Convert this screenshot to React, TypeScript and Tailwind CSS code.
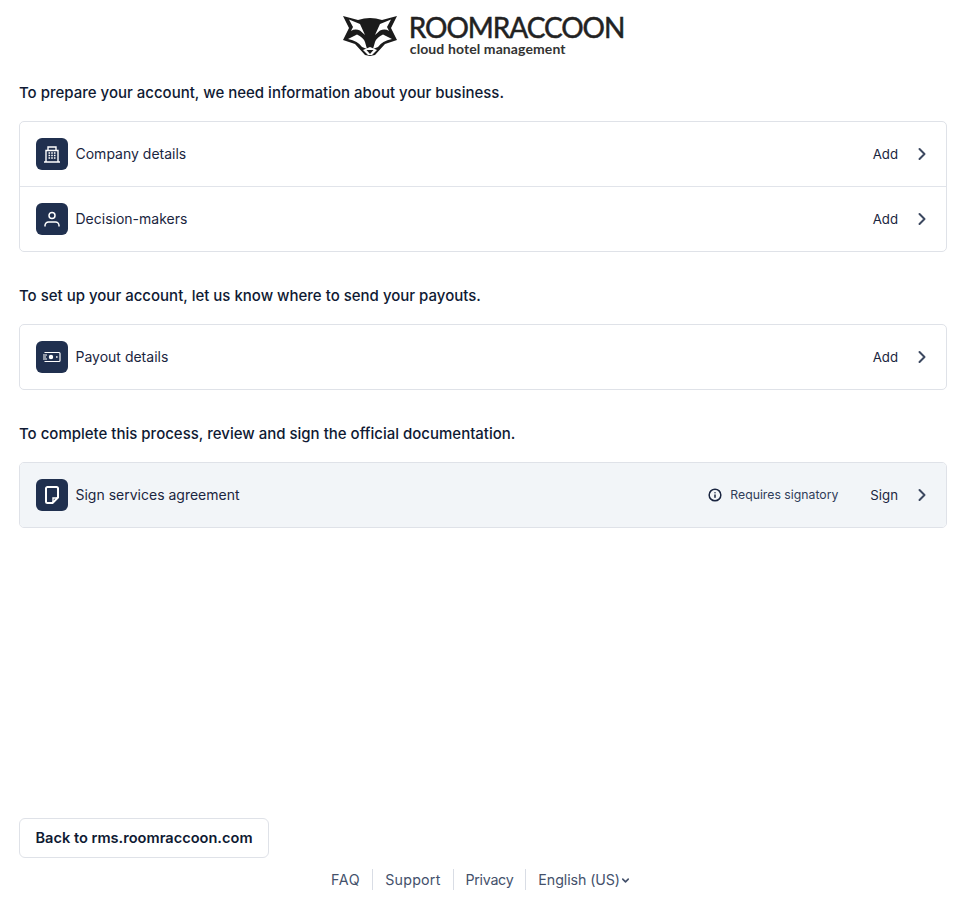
import { ChevronRight, ChevronDown, Info } from "lucide-react";
import type { ReactNode } from "react";

function Logo() {
  return (
    <div className="flex h-[64px] items-start justify-center pt-[13px]">
      <svg width="56" height="42" viewBox="0 0 56 42" className="mt-[2px] mr-[12px]">
        <path
          fill="#1b1b1b"
          d="M1 1 L16 5 Q28 1 40 5 L55 1 L49 13 L55 25 L43 29 L33 40 L28 41 L23 40 L13 29 L1 25 L7 13 Z"
        />
        <path fill="#fff" d="M7 4.5 L18 9 L23 20 L18 15.5 Q13 13.5 9 16 L11 12 Z" />
        <path fill="#fff" d="M49 4.5 L38 9 L33 20 L38 15.5 Q43 13.5 47 16 L45 12 Z" />
        <path fill="#fff" d="M6 24 L15 19.5 Q21 22 23 27 L25 34 L20 32 Q16 26 6 24 Z" />
        <path fill="#fff" d="M50 24 L41 19.5 Q35 22 33 27 L31 34 L36 32 Q40 26 50 24 Z" />
        <path fill="#fff" d="M21 35 L28 32 L35 35 L30 40 L26 40 Z" />
        <path fill="#1b1b1b" d="M24.5 35 L31.5 35 L28 39 Z" />
      </svg>
      <div className="font-['Lato',sans-serif] text-[#222222]">
        <div className="-ml-[1px] text-[28px] leading-[28px] tracking-[-1.05px] [-webkit-text-stroke:0.5px_#222222]">
          ROOMRACCOON
        </div>
        <div className="text-[14px] leading-[16px] font-bold tracking-[0.1px] text-[#333333]">
          cloud hotel management
        </div>
      </div>
    </div>
  );
}

function IconTile({ children }: { children: ReactNode }) {
  return (
    <span className="flex h-8 w-8 items-center justify-center rounded-[6px] bg-[#20304f] text-white">
      {children}
    </span>
  );
}

function Row({
  icon,
  label,
  action,
  note,
  shaded,
  divided,
}: {
  icon: ReactNode;
  label: string;
  action: string;
  note?: string;
  shaded?: boolean;
  divided?: boolean;
}) {
  return (
    <div
      className={`flex items-center pr-[14px] pl-[16px] ${shaded ? "bg-[#f2f5f8]" : ""} ${
        divided ? "h-[65px] border-b border-[#e1e4ea]" : "h-[64px]"
      }`}
    >
      <IconTile>{icon}</IconTile>
      <span className="-mt-[1px] ml-[7.5px] text-[14px] leading-5 text-[#1a2540]">{label}</span>
      <div className="ml-auto flex items-center text-[13.25px] text-[#1a2540]">
        {note && (
          <span className="mt-[1px] mr-8 flex items-center text-[12.25px] text-[#2f3c59]">
            <Info size={14} strokeWidth={2.6} className="mr-[8px] -mt-[1px] text-[#1a2540]" />
            {note}
          </span>
        )}
        <span className="mt-[1px]">{action}</span>
        <ChevronRight size={20} strokeWidth={2.4} className="ml-[14px] text-[#3c4860]" />
      </div>
    </div>
  );
}

function Card({ children }: { children: ReactNode }) {
  return <div className="overflow-hidden rounded-[5px] border border-[#dfe2e8]">{children}</div>;
}

function Heading({ children }: { children: ReactNode }) {
  return <h2 className="mb-[18px] text-[15px] leading-5 font-medium text-[#0f1a33]">{children}</h2>;
}

function BuildingIcon() {
  return (
    <svg width="20" height="20" viewBox="0 0 20 20" fill="none" stroke="currentColor" strokeWidth="1.4">
      <path d="M2 18h16" />
      <path d="M4 18V6.5h12V18" />
      <path d="M6 6.5V3h8v3.5" />
      <path d="M6.5 9h1.6M9.2 9h1.6M11.9 9h1.6M6.5 11.5h1.6M9.2 11.5h1.6M11.9 11.5h1.6M6.5 14h1.6M9.2 14h1.6M11.9 14h1.6" strokeWidth="1.5" />
    </svg>
  );
}

function PersonIcon() {
  return (
    <svg width="20" height="20" viewBox="0 0 20 20" fill="none" stroke="currentColor" strokeWidth="1.5">
      <circle cx="10" cy="6.5" r="3" />
      <path d="M3 17.5v-1a3.5 3.5 0 0 1 3.5-3.5h7a3.5 3.5 0 0 1 3.5 3.5v1" />
    </svg>
  );
}

function PayoutIcon() {
  return (
    <svg width="20" height="20" viewBox="0 0 20 20" fill="none" stroke="currentColor" strokeWidth="1.2">
      <path d="M2.5 5.5h14.5a1 1 0 0 1 1 1v7a1 1 0 0 1-1 1H2.5" />
      <path d="M1 8h4M1 10h3M1 12h4" />
      <circle cx="9" cy="10" r="1.6" fill="currentColor" />
      <path d="M14 10h1.6" strokeWidth="1.6" />
    </svg>
  );
}

function NoteIcon() {
  return (
    <svg width="20" height="20" viewBox="0 0 20 20" fill="none" stroke="currentColor" strokeWidth="2">
      <path
        d="M5.5 2h9A1.5 1.5 0 0 1 16 3.5V12.5L10.5 18H5.5A1.5 1.5 0 0 1 4 16.5v-13A1.5 1.5 0 0 1 5.5 2Z"
        strokeLinejoin="round"
      />
      <path d="M11 17.5V13h4.5" strokeWidth="1.4" />
    </svg>
  );
}

function FooterLink({ children, last }: { children: ReactNode; last?: boolean }) {
  return (
    <span className={`flex h-[21px] items-center px-3 ${last ? "" : "border-r border-[#d9dde5]"}`}>{children}</span>
  );
}

export default function App() {
  return (
    <div className="flex h-[915px] flex-col pr-[10px] pl-[19px] font-['Inter',sans-serif]">
      <Logo />
      <div className="mt-[19px]">
        <Heading>To prepare your account, we need information about your business.</Heading>
        <Card>
          <Row icon={<BuildingIcon />} label="Company details" action="Add" divided />
          <Row icon={<PersonIcon />} label="Decision-makers" action="Add" />
        </Card>
      </div>
      <div className="mt-[34px]">
        <Heading>To set up your account, let us know where to send your payouts.</Heading>
        <Card>
          <Row icon={<PayoutIcon />} label="Payout details" action="Add" />
        </Card>
      </div>
      <div className="mt-[34px]">
        <Heading>To complete this process, review and sign the official documentation.</Heading>
        <Card>
          <Row icon={<NoteIcon />} label="Sign services agreement" action="Sign" note="Requires signatory" shaded />
        </Card>
      </div>
      <div className="mt-auto pb-[25px]">
        <button className="h-10 w-[250px] rounded-[6px] border border-[#dfe2e8] bg-white pt-[1px] text-[14.6px] font-semibold text-[#0f1a33]">
          Back to rms.roomraccoon.com
        </button>
        <div className="mt-[11px] flex items-center justify-center pr-[4px] text-[14.25px] text-[#44516b]">
          <FooterLink>
            <span className="tracking-[0.6px]">FAQ</span>
          </FooterLink>
          <FooterLink>
            <span className="tracking-[0.2px]">Support</span>
          </FooterLink>
          <FooterLink>
            <span className="tracking-[-0.3px]">Privacy</span>
          </FooterLink>
          <FooterLink last>
            <span className="tracking-[-0.1px]">English (US)</span>
            <ChevronDown size={11} strokeWidth={3.5} className="mt-[2px]" />
          </FooterLink>
        </div>
      </div>
    </div>
  );
}
